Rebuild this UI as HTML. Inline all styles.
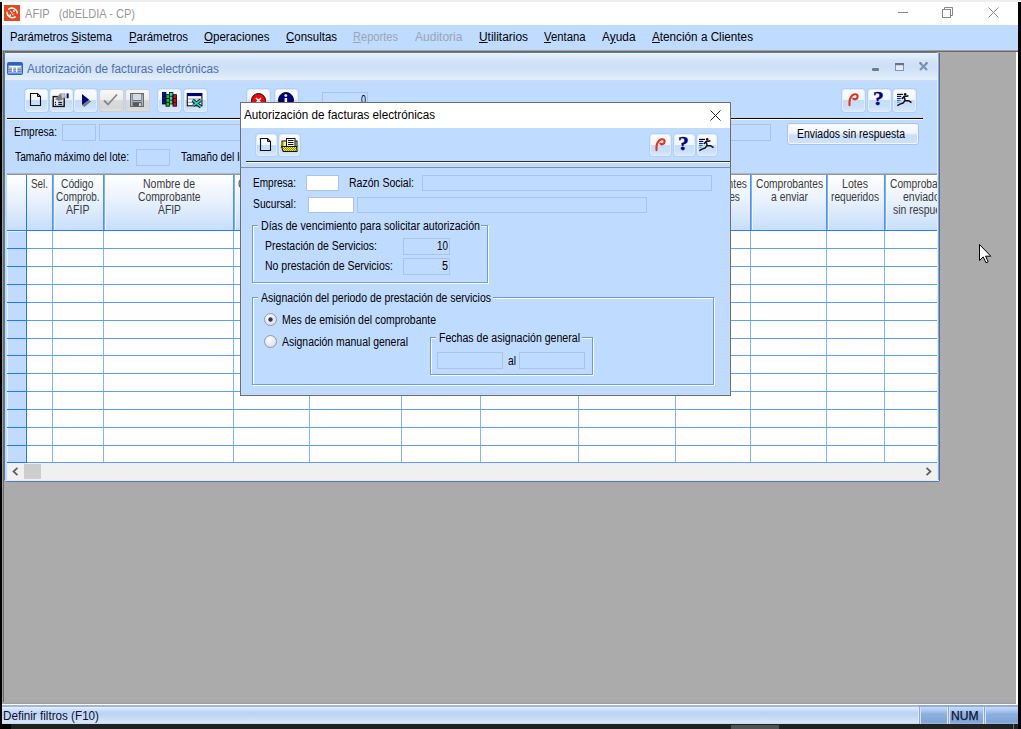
<!DOCTYPE html>
<html><head><meta charset="utf-8"><style>
html,body{margin:0;padding:0;width:1021px;height:729px;overflow:hidden;background:#ababab;}
body{position:relative;font-family:"Liberation Sans", sans-serif;}
div{position:absolute;box-sizing:border-box;}
.t{white-space:pre;}
u{text-decoration:underline;text-underline-offset:1px;}
svg{position:absolute;overflow:visible}

.tb{width:23px;height:23px;border-radius:3px;border:1px solid #e2edfb;
 background:linear-gradient(#fbfdff 0%,#eef5fe 48%,#c6ddf9 50%,#cadffa 80%,#d8e8fc 100%);
 box-shadow:0 0 0 1px rgba(150,190,240,0.35);}
.tg{width:24px;height:23px;border-radius:3px;border:1px solid #cfcfcf;
 background:linear-gradient(#f7f7f7 0%,#ececec 48%,#dadada 50%,#d6d6d6 85%,#e0e0e0 100%);}
.fd{border:1px solid #a9c4e6;background:#bfdbff;}
.fw{border:1px solid #a9c4e6;background:#ffffff;}
.gb{border:1px solid #6f9bd6;box-shadow:inset 1px 1px 0 #fff, 1px 1px 0 #fff;}

</style></head><body>
<div style="left:0px;top:0px;width:1021px;height:729px;background:#ababab"></div>
<div style="left:0px;top:0px;width:1021px;height:2px;background:#eeeeee"></div>
<div style="left:0px;top:2px;width:2px;height:727px;background:#000"></div>
<div style="left:1018px;top:2px;width:3px;height:727px;background:#000"></div>
<div style="left:2px;top:2px;width:1016px;height:23px;background:#fff"></div>
<svg style="left:4px;top:5px" width="16" height="16" viewBox="0 0 16 16"><rect width="16" height="16" fill="#e04a22"/><path d="M4.2 4.6 A5.4 5.4 0 0 1 13.3 8.6" stroke="#fff" stroke-width="1.4" fill="none"/><path d="M11.6 11.6 A5.4 5.4 0 0 1 3.0 6.8" stroke="#fff" stroke-width="1.4" fill="none"/><path d="M6.3 6.0 L9.8 10.4" stroke="#fff" stroke-width="1.3" stroke-dasharray="1.2 0.6" fill="none"/><circle cx="6.2" cy="10.2" r="0.9" fill="#fff"/><circle cx="9.9" cy="5.9" r="0.9" fill="#fff"/></svg>
<div class="t" style="left:25px;top:8px;font-size:12px;line-height:12px;color:#999999;transform:scaleX(0.9232);transform-origin:0 0;">AFIP   (dbELDIA - CP)</div>
<div style="left:898px;top:12px;width:10px;height:1px;background:#888"></div>
<svg style="left:940px;top:6px" width="14" height="12" viewBox="0 0 14 12"><rect x="2.5" y="3.5" width="8" height="8" fill="none" stroke="#888"/><path d="M4.5 3.5 V1.5 H12.5 V9.5 H10.5" fill="none" stroke="#888"/></svg>
<svg style="left:988px;top:7px" width="11" height="11" viewBox="0 0 11 11"><path d="M0.5 0.5 L10.5 10.5 M10.5 0.5 L0.5 10.5" stroke="#888" stroke-width="1"/></svg>
<div style="left:2px;top:25px;width:1016px;height:25px;background:#bfdbff"></div>
<div class="t" style="left:10px;top:31px;font-size:12px;line-height:12px;color:#000;transform:scaleX(0.9383);transform-origin:0 0;">Parámetros <u>S</u>istema</div>
<div class="t" style="left:129px;top:31px;font-size:12px;line-height:12px;color:#000;transform:scaleX(0.9511);transform-origin:0 0;"><u>P</u>arámetros</div>
<div class="t" style="left:204px;top:31px;font-size:12px;line-height:12px;color:#000;transform:scaleX(0.9626);transform-origin:0 0;"><u>O</u>peraciones</div>
<div class="t" style="left:286px;top:31px;font-size:12px;line-height:12px;color:#000;transform:scaleX(0.9555);transform-origin:0 0;"><u>C</u>onsultas</div>
<div class="t" style="left:353px;top:31px;font-size:12px;line-height:12px;color:#9aa6b4;transform:scaleX(0.9240);transform-origin:0 0;"><u>R</u>eportes</div>
<div class="t" style="left:415px;top:31px;font-size:12px;line-height:12px;color:#9aa6b4;transform:scaleX(1.0026);transform-origin:0 0;">Auditoria</div>
<div class="t" style="left:479px;top:31px;font-size:12px;line-height:12px;color:#000;transform:scaleX(0.9930);transform-origin:0 0;"><u>U</u>tilitarios</div>
<div class="t" style="left:544px;top:31px;font-size:12px;line-height:12px;color:#000;transform:scaleX(0.9422);transform-origin:0 0;"><u>V</u>entana</div>
<div class="t" style="left:602px;top:31px;font-size:12px;line-height:12px;color:#000;transform:scaleX(0.9908);transform-origin:0 0;">A<u>y</u>uda</div>
<div class="t" style="left:652px;top:31px;font-size:12px;line-height:12px;color:#000;transform:scaleX(0.9767);transform-origin:0 0;"><u>A</u>tención a Clientes</div>
<div style="left:2px;top:50px;width:1016px;height:1px;background:#a0a0a0"></div>
<div style="left:2px;top:50px;width:1px;height:654px;background:#a0a0a0"></div>
<div style="left:3px;top:51px;width:1015px;height:1px;background:#696969"></div>
<div style="left:3px;top:51px;width:1px;height:653px;background:#696969"></div>
<div style="left:1016px;top:52px;width:2px;height:653px;background:#fff"></div>
<div style="left:2px;top:702px;width:1014px;height:2px;background:linear-gradient(#a8a8a8,#9c9c9c)"></div>
<div style="left:2px;top:704px;width:1016px;height:1px;background:#fff"></div>
<div style="left:4px;top:52px;width:936px;height:430px;background:#bfdbff;border:1px solid #5a7aa5;border-radius:2px 5px 2px 3px"></div>
<div style="left:5px;top:53px;width:934px;height:27px;background:linear-gradient(#eaf2fd 0%,#d3e3f8 28%,#cde0f7 50%,#d9e7f9 80%,#e6f0fc 100%)"></div>
<svg style="left:7px;top:62px" width="16" height="13" viewBox="0 0 16 13"><rect x="0.5" y="0.5" width="15" height="12" rx="1" fill="#6b8fd0" stroke="#3563b8"/><rect x="1" y="1" width="14" height="2" fill="#2f5fc0"/><path d="M1 6.5H15M1 8.5H15M1 10.5H15" stroke="#a9bfe8" stroke-width="0.7"/><rect x="2" y="4" width="12" height="1.6" fill="#f4f4f4"/><rect x="5" y="4" width="1.3" height="6" fill="#fff"/><rect x="9" y="4" width="1.3" height="6" fill="#fff"/></svg>
<div class="t" style="left:27px;top:63px;font-size:12px;line-height:12px;color:#4c70a8;transform:scaleX(0.9790);transform-origin:0 0;">Autorización de facturas electrónicas</div>
<div style="left:872px;top:68px;width:7px;height:3px;background:#6c7b94;border-radius:1px"></div>
<svg style="left:895px;top:63px" width="9" height="8" viewBox="0 0 9 8"><rect x="0.5" y="0.5" width="8" height="7" fill="#dfeafa" stroke="#7d96bd"/><rect x="0" y="0" width="9" height="2.2" fill="#697284"/></svg>
<svg style="left:919px;top:62px" width="9" height="9" viewBox="0 0 9 9"><path d="M1 1 L8 8 M8 1 L1 8" stroke="#7a92b8" stroke-width="2.2"/><path d="M0.3 0.8 H2.4 M6.6 0.8 H8.7" stroke="#6a7486" stroke-width="1.2"/></svg>
<div style="left:5px;top:80px;width:934px;height:2px;background:#c7dcf6"></div>
<div class="tb" style="left:25px;top:89px"></div>
<div class="tb" style="left:50px;top:89px"></div>
<div class="tb" style="left:74px;top:89px"></div>
<div class="tg" style="left:99px;top:89px;width:25px"></div>
<div class="tg" style="left:125px;top:89px;width:25px"></div>
<div class="tb" style="left:158px;top:89px"></div>
<div class="tb" style="left:184px;top:89px"></div>
<div class="tb" style="left:247px;top:89px"></div>
<div class="tb" style="left:275px;top:89px"></div>
<div class="tb" style="left:842px;top:89px"></div>
<div class="tb" style="left:868px;top:89px"></div>
<div class="tb" style="left:893px;top:89px"></div>
<svg style="left:30px;top:93px" width="12" height="14" viewBox="0 0 12 14"><path d="M0.5 0.5 H7.5 L10.5 3.5 V12.5 H0.5 Z" fill="none" stroke="#111" stroke-width="1.1"/><path d="M7.5 0.5 V3.5 H10.5" fill="none" stroke="#111" stroke-width="1"/></svg>
<svg style="left:50px;top:88px" width="23" height="26" viewBox="0 0 23 26"><rect x="3.2" y="8.6" width="11" height="9.8" fill="#dfe9f6" stroke="#111" stroke-width="1.4"/><path d="M5 14.4H6M8.3 14.4H12.2M5 16.4H6M8.3 16.4H12.2" stroke="#222" stroke-width="1.1"/><path d="M5.3 11.3 L10.2 5.4 H15.1 L15.6 9.8 L11.2 12.2 L8.3 12.7 Z" fill="#7d7d7d"/><path d="M11 6 H14.6 L15 9 L12 10.5 Z" fill="#c4c4c4"/><rect x="16.6" y="5.4" width="2" height="4.9" fill="#0000b0"/></svg>
<svg style="left:73px;top:88px" width="23" height="26" viewBox="0 0 23 26"><path d="M9 17 L16.2 12.1 L18.1 13.6 L11.3 18.9 Z" fill="#7a7a7a"/><path d="M9 6 L16.2 11.8 L9 17 Z" fill="#000080"/></svg>
<svg style="left:103px;top:93px" width="16" height="14" viewBox="0 0 16 14"><path d="M1 7.5 L5 11.5 L14 1.5" fill="none" stroke="#888" stroke-width="1.8"/></svg>
<svg style="left:130px;top:93px" width="14" height="14" viewBox="0 0 14 14"><rect x="0" y="0" width="14" height="14" fill="#6b6b6b"/><rect x="1" y="1" width="1.5" height="12" fill="#a3b3ca"/><rect x="11.5" y="1.5" width="1.5" height="11.5" fill="#a3b3ca"/><rect x="3" y="1" width="8" height="6" fill="#d3dbe7"/><rect x="2.5" y="8" width="9" height="1" fill="#a3b3ca"/><rect x="3.3" y="9.6" width="8" height="3.6" fill="#585858"/><rect x="9" y="10.2" width="1.8" height="2.8" fill="#d6dde8"/></svg>
<svg style="left:162px;top:92px" width="15" height="15" viewBox="0 0 15 15"><rect x="0.5" y="0.5" width="3.4" height="11.5" fill="#0000ff" stroke="#000" stroke-width="0.8"/><path d="M0.5 4.3 H3.9" stroke="#000" stroke-width="0.8"/><path d="M0.5 8.1 H3.9" stroke="#000" stroke-width="0.8"/><rect x="4.0" y="2.7" width="3.4" height="11.5" fill="#00d800" stroke="#000" stroke-width="0.8"/><path d="M4.0 6.5 H7.4" stroke="#000" stroke-width="0.8"/><path d="M4.0 10.3 H7.4" stroke="#000" stroke-width="0.8"/><rect x="7.5" y="0.5" width="3.4" height="11.5" fill="#00e8e8" stroke="#000" stroke-width="0.8"/><path d="M7.5 4.3 H10.9" stroke="#000" stroke-width="0.8"/><path d="M7.5 8.1 H10.9" stroke="#000" stroke-width="0.8"/><rect x="11.0" y="2.7" width="3.4" height="11.5" fill="#f00000" stroke="#000" stroke-width="0.8"/><path d="M11.0 6.5 H14.4" stroke="#000" stroke-width="0.8"/><path d="M11.0 10.3 H14.4" stroke="#000" stroke-width="0.8"/></svg>
<svg style="left:184px;top:90px" width="22" height="22" viewBox="0 0 22 22"><rect x="3.3" y="3.5" width="14.6" height="12.3" fill="#f4f4f4" stroke="#151515" stroke-width="1.1"/><rect x="3.3" y="3.5" width="14.6" height="2.6" fill="#000080"/><path d="M4 9H17.5M4 12.4H17.5" stroke="#a0a0a0" stroke-width="1"/><path d="M4 7.3H17.5M4 10.7H17.5M4 14H17.5" stroke="#fff" stroke-width="1" stroke-dasharray="1.5 2"/><path d="M8.6 10.2 L16.9 16.8 M9.3 15.4 L16.8 10.2" stroke="#111" stroke-width="3.4"/><path d="M8.6 10.2 L16.9 16.8 M9.3 15.4 L16.8 10.2" stroke="#22d6d0" stroke-width="1.7"/></svg>
<svg style="left:251px;top:93px" width="16" height="16" viewBox="0 0 16 16"><circle cx="7.5" cy="7.5" r="7" fill="#ff0000" stroke="#111" stroke-width="1"/><path d="M5 5 L10 10 M10 5 L5 10" stroke="#fff" stroke-width="1.6"/></svg>
<svg style="left:278px;top:92px" width="16" height="16" viewBox="0 0 16 16"><circle cx="8" cy="8" r="7.5" fill="#000080" stroke="#111" stroke-width="1"/><circle cx="7.8" cy="3.6" r="1.4" fill="#fff"/><rect x="6.6" y="6" width="2.5" height="6" fill="#fff"/></svg>
<div style="left:322px;top:92px;width:46px;height:17px;border:1px solid #a9c4e6"></div>
<div class="t" style="left:361px;top:94px;font-size:12px;line-height:12px;color:#000;transform:scaleX(0.7477);transform-origin:0 0;">0</div>
<svg style="left:843px;top:89px" width="22" height="22" viewBox="0 0 22 22"><path d="M6.5 16.2 C6.2 12.5 6.8 8.6 9.3 6.4 C11.5 4.5 14.6 4.8 14.6 7.6 C14.6 10.2 11.6 11 10.2 9.6" fill="none" stroke="#e8321c" stroke-width="2.1" stroke-linecap="round"/></svg>
<div class="t" style="left:873px;top:89px;font-family:'Liberation Serif',serif;font-weight:bold;font-size:18px;line-height:20px;color:#000080;-webkit-text-stroke:0.4px #000080;transform:scaleX(1.2);transform-origin:0 0">?</div>
<svg style="left:894px;top:89px" width="22" height="22" viewBox="0 0 22 22"><path d="M3 5.4H9" stroke="#111" stroke-width="1.2"/><path d="M3 7.4H7.3" stroke="#1010a0" stroke-width="1.2"/><path d="M3 9.5H6.8" stroke="#1a1aff" stroke-width="1.2"/><path d="M3 11.5H6.5" stroke="#109080" stroke-width="1.2"/><path d="M3.3 13.4H5.4" stroke="#888" stroke-width="1"/><path d="M3.3 16.6 L6 15.1 L9 14 L11.2 11.5 L14.8 11.8 L17.5 13.6 M11.2 11.5 L10 7.5 L7.8 10 M10 7.5 L12.5 7.2 L14.5 6.8" fill="none" stroke="#111" stroke-width="1.5" stroke-linejoin="round"/><circle cx="11.2" cy="5.4" r="1.3" fill="#111"/></svg>
<div style="left:7px;top:118px;width:916px;height:1px;background:#000"></div>
<div style="left:7px;top:119px;width:916px;height:1px;background:#fff"></div>
<div class="t" style="left:14px;top:126px;font-size:12px;line-height:12px;color:#000;transform:scaleX(0.8372);transform-origin:0 0;">Empresa:</div>
<div class="fd" style="left:62px;top:124px;width:34px;height:17px"></div>
<div class="fd" style="left:99px;top:124px;width:672px;height:17px"></div>
<div class="t" style="left:15px;top:151px;font-size:12px;line-height:12px;color:#000;transform:scaleX(0.8545);transform-origin:0 0;">Tamaño máximo del lote:</div>
<div class="fd" style="left:136px;top:149px;width:34px;height:17px"></div>
<div class="t" style="left:181px;top:151px;font-size:12px;line-height:12px;color:#000;transform:scaleX(0.8600);transform-origin:0 0;">Tamaño del lote:</div>
<div style="left:787px;top:123px;width:132px;height:22px;border-radius:3px;border:1px solid #a8c6ec;background:linear-gradient(#fbfdff 0%,#eef5fe 45%,#c9def9 55%,#cfe2fb 100%);box-shadow:inset 0 0 0 1px #f2f7fe"></div>
<div class="t" style="left:797px;top:128px;font-size:12px;line-height:12px;color:#000;transform:scaleX(0.8704);transform-origin:0 0;">Enviados sin respuesta</div>
<div style="left:7px;top:173px;width:930px;height:1px;background:#a9b4c2"></div>
<div style="left:7px;top:174px;width:930px;height:1px;background:#8f9aa8"></div>
<div style="left:7px;top:175px;width:930px;height:55px;background:linear-gradient(#ffffff 0%,#e9f2fd 45%,#c7defa 100%)"></div>
<div style="left:7px;top:231px;width:930px;height:232px;background:#fff"></div>
<div style="left:7px;top:231px;width:19px;height:232px;background:#c0dbfd;box-shadow:inset 1px 1px 0 #e6f1ff"></div>
<div style="left:52px;top:175px;width:1px;height:55px;background:#4a90ff"></div>
<div style="left:53px;top:175px;width:1px;height:55px;background:#78b0ff"></div>
<div style="left:54px;top:175px;width:1px;height:55px;background:rgba(255,255,255,0.7)"></div>
<div style="left:52px;top:231px;width:1px;height:232px;background:#7fb3ff"></div>
<div style="left:103px;top:175px;width:1px;height:55px;background:#4a90ff"></div>
<div style="left:104px;top:175px;width:1px;height:55px;background:#78b0ff"></div>
<div style="left:105px;top:175px;width:1px;height:55px;background:rgba(255,255,255,0.7)"></div>
<div style="left:103px;top:231px;width:1px;height:232px;background:#7fb3ff"></div>
<div style="left:233px;top:175px;width:1px;height:55px;background:#4a90ff"></div>
<div style="left:234px;top:175px;width:1px;height:55px;background:#78b0ff"></div>
<div style="left:235px;top:175px;width:1px;height:55px;background:rgba(255,255,255,0.7)"></div>
<div style="left:233px;top:231px;width:1px;height:232px;background:#7fb3ff"></div>
<div style="left:309px;top:175px;width:1px;height:55px;background:#4a90ff"></div>
<div style="left:310px;top:175px;width:1px;height:55px;background:#78b0ff"></div>
<div style="left:311px;top:175px;width:1px;height:55px;background:rgba(255,255,255,0.7)"></div>
<div style="left:309px;top:231px;width:1px;height:232px;background:#7fb3ff"></div>
<div style="left:401px;top:175px;width:1px;height:55px;background:#4a90ff"></div>
<div style="left:402px;top:175px;width:1px;height:55px;background:#78b0ff"></div>
<div style="left:403px;top:175px;width:1px;height:55px;background:rgba(255,255,255,0.7)"></div>
<div style="left:401px;top:231px;width:1px;height:232px;background:#7fb3ff"></div>
<div style="left:480px;top:175px;width:1px;height:55px;background:#4a90ff"></div>
<div style="left:481px;top:175px;width:1px;height:55px;background:#78b0ff"></div>
<div style="left:482px;top:175px;width:1px;height:55px;background:rgba(255,255,255,0.7)"></div>
<div style="left:480px;top:231px;width:1px;height:232px;background:#7fb3ff"></div>
<div style="left:578px;top:175px;width:1px;height:55px;background:#4a90ff"></div>
<div style="left:579px;top:175px;width:1px;height:55px;background:#78b0ff"></div>
<div style="left:580px;top:175px;width:1px;height:55px;background:rgba(255,255,255,0.7)"></div>
<div style="left:578px;top:231px;width:1px;height:232px;background:#7fb3ff"></div>
<div style="left:675px;top:175px;width:1px;height:55px;background:#4a90ff"></div>
<div style="left:676px;top:175px;width:1px;height:55px;background:#78b0ff"></div>
<div style="left:677px;top:175px;width:1px;height:55px;background:rgba(255,255,255,0.7)"></div>
<div style="left:675px;top:231px;width:1px;height:232px;background:#7fb3ff"></div>
<div style="left:750px;top:175px;width:1px;height:55px;background:#4a90ff"></div>
<div style="left:751px;top:175px;width:1px;height:55px;background:#78b0ff"></div>
<div style="left:752px;top:175px;width:1px;height:55px;background:rgba(255,255,255,0.7)"></div>
<div style="left:750px;top:231px;width:1px;height:232px;background:#7fb3ff"></div>
<div style="left:826px;top:175px;width:1px;height:55px;background:#4a90ff"></div>
<div style="left:827px;top:175px;width:1px;height:55px;background:#78b0ff"></div>
<div style="left:828px;top:175px;width:1px;height:55px;background:rgba(255,255,255,0.7)"></div>
<div style="left:826px;top:231px;width:1px;height:232px;background:#7fb3ff"></div>
<div style="left:884px;top:175px;width:1px;height:55px;background:#4a90ff"></div>
<div style="left:885px;top:175px;width:1px;height:55px;background:#78b0ff"></div>
<div style="left:886px;top:175px;width:1px;height:55px;background:rgba(255,255,255,0.7)"></div>
<div style="left:884px;top:231px;width:1px;height:232px;background:#7fb3ff"></div>
<div style="left:26px;top:248px;width:911px;height:1px;background:#5c9dff"></div>
<div style="left:7px;top:248px;width:19px;height:1px;background:#1f78ff"></div>
<div style="left:26px;top:266px;width:911px;height:1px;background:#5c9dff"></div>
<div style="left:7px;top:266px;width:19px;height:1px;background:#1f78ff"></div>
<div style="left:26px;top:284px;width:911px;height:1px;background:#5c9dff"></div>
<div style="left:7px;top:284px;width:19px;height:1px;background:#1f78ff"></div>
<div style="left:26px;top:302px;width:911px;height:1px;background:#5c9dff"></div>
<div style="left:7px;top:302px;width:19px;height:1px;background:#1f78ff"></div>
<div style="left:26px;top:320px;width:911px;height:1px;background:#5c9dff"></div>
<div style="left:7px;top:320px;width:19px;height:1px;background:#1f78ff"></div>
<div style="left:26px;top:338px;width:911px;height:1px;background:#5c9dff"></div>
<div style="left:7px;top:338px;width:19px;height:1px;background:#1f78ff"></div>
<div style="left:26px;top:355px;width:911px;height:1px;background:#5c9dff"></div>
<div style="left:7px;top:355px;width:19px;height:1px;background:#1f78ff"></div>
<div style="left:26px;top:373px;width:911px;height:1px;background:#5c9dff"></div>
<div style="left:7px;top:373px;width:19px;height:1px;background:#1f78ff"></div>
<div style="left:26px;top:391px;width:911px;height:1px;background:#5c9dff"></div>
<div style="left:7px;top:391px;width:19px;height:1px;background:#1f78ff"></div>
<div style="left:26px;top:409px;width:911px;height:1px;background:#5c9dff"></div>
<div style="left:7px;top:409px;width:19px;height:1px;background:#1f78ff"></div>
<div style="left:26px;top:427px;width:911px;height:1px;background:#5c9dff"></div>
<div style="left:7px;top:427px;width:19px;height:1px;background:#1f78ff"></div>
<div style="left:26px;top:445px;width:911px;height:1px;background:#5c9dff"></div>
<div style="left:7px;top:445px;width:19px;height:1px;background:#1f78ff"></div>
<div style="left:26px;top:462px;width:911px;height:1px;background:#5c9dff"></div>
<div style="left:7px;top:462px;width:19px;height:1px;background:#1f78ff"></div>
<div style="left:7px;top:230px;width:930px;height:1px;background:#2a7dff"></div>
<div style="left:26px;top:175px;width:1px;height:288px;background:#1f78ff"></div>
<div class="t" style="left:31px;top:178px;font-size:12px;line-height:12px;color:#3a3a3a;transform:scaleX(0.8218);transform-origin:0 0;">Sel.</div>
<div class="t" style="left:61.2px;top:178px;font-size:12px;line-height:12px;color:#3a3a3a;transform:scaleX(0.8546);transform-origin:0 0;">Código</div>
<div class="t" style="left:55.8px;top:191px;font-size:12px;line-height:12px;color:#3a3a3a;transform:scaleX(0.8256);transform-origin:0 0;">Comprob.</div>
<div class="t" style="left:65.8px;top:204px;font-size:12px;line-height:12px;color:#3a3a3a;transform:scaleX(0.8811);transform-origin:0 0;">AFIP</div>
<div class="t" style="left:143.0px;top:178px;font-size:12px;line-height:12px;color:#3a3a3a;transform:scaleX(0.8758);transform-origin:0 0;">Nombre de</div>
<div class="t" style="left:137.8px;top:191px;font-size:12px;line-height:12px;color:#3a3a3a;transform:scaleX(0.8595);transform-origin:0 0;">Comprobante</div>
<div class="t" style="left:157.5px;top:204px;font-size:12px;line-height:12px;color:#3a3a3a;transform:scaleX(0.8623);transform-origin:0 0;">AFIP</div>
<div class="t" style="left:238px;top:178px;font-size:12px;line-height:12px;color:#3a3a3a;transform:scaleX(0.8500);transform-origin:0 0;">Cantidad</div>
<div class="t" style="left:680.1px;top:178px;font-size:12px;line-height:12px;color:#3a3a3a;transform:scaleX(0.8500);transform-origin:0 0;">Comprobantes</div>
<div class="t" style="left:689.6px;top:191px;font-size:12px;line-height:12px;color:#3a3a3a;transform:scaleX(0.8500);transform-origin:0 0;">pendientes</div>
<div class="t" style="left:755.5px;top:178px;font-size:12px;line-height:12px;color:#3a3a3a;transform:scaleX(0.8511);transform-origin:0 0;">Comprobantes</div>
<div class="t" style="left:770.5px;top:191px;font-size:12px;line-height:12px;color:#3a3a3a;transform:scaleX(0.8664);transform-origin:0 0;">a enviar</div>
<div class="t" style="left:841.5px;top:178px;font-size:12px;line-height:12px;color:#3a3a3a;transform:scaleX(0.8856);transform-origin:0 0;">Lotes</div>
<div class="t" style="left:830.5px;top:191px;font-size:12px;line-height:12px;color:#3a3a3a;transform:scaleX(0.8465);transform-origin:0 0;">requeridos</div>
<div class="t" style="left:890.0px;top:178px;font-size:12px;line-height:12px;color:#3a3a3a;transform:scaleX(0.8511);transform-origin:0 0;">Comprobantes</div>
<div class="t" style="left:902.5px;top:191px;font-size:12px;line-height:12px;color:#3a3a3a;transform:scaleX(0.8741);transform-origin:0 0;">enviados</div>
<div class="t" style="left:892.5px;top:204px;font-size:12px;line-height:12px;color:#3a3a3a;transform:scaleX(0.8687);transform-origin:0 0;">sin respuesta</div>
<div style="left:940px;top:170px;width:40px;height:70px;background:#ababab"></div>
<div style="left:937px;top:53px;width:3px;height:428px;background:#bfdbff"></div>
<div style="left:937px;top:53px;width:1px;height:428px;background:#dcebfd"></div>
<div style="left:938px;top:53px;width:1px;height:428px;background:#8aa6cc"></div>
<div style="left:939px;top:53px;width:1px;height:428px;background:#4f6f9c"></div>
<div style="left:7px;top:463px;width:930px;height:17px;background:#f0f0f0"></div>
<div style="left:24px;top:464px;width:17px;height:15px;background:#cdcdcd"></div>
<svg style="left:12px;top:467px" width="7" height="9" viewBox="0 0 7 9"><path d="M5.5 0.8 L1.5 4.5 L5.5 8.2" fill="none" stroke="#606060" stroke-width="1.8"/></svg>
<svg style="left:925px;top:467px" width="7" height="9" viewBox="0 0 7 9"><path d="M1.5 0.8 L5.5 4.5 L1.5 8.2" fill="none" stroke="#606060" stroke-width="1.8"/></svg>
<div style="left:5px;top:480px;width:934px;height:1px;background:#dcebfd"></div>
<div style="left:240px;top:102px;width:491px;height:294px;background:#bfdbff;border:1px solid #6e6e6e"></div>
<div style="left:241px;top:103px;width:489px;height:25px;background:#fff"></div>
<div class="t" style="left:244px;top:109px;font-size:12px;line-height:12px;color:#000;transform:scaleX(0.9739);transform-origin:0 0;">Autorización de facturas electrónicas</div>
<svg style="left:710px;top:110px" width="11" height="11" viewBox="0 0 11 11"><path d="M0.5 0.5 L10.5 10.5 M10.5 0.5 L0.5 10.5" stroke="#222" stroke-width="1"/></svg>
<div class="tb" style="left:256px;top:134px;width:21px;height:22px"></div>
<div class="tb" style="left:279px;top:134px;width:21px;height:22px"></div>
<div class="tb" style="left:650px;top:134px;width:21px;height:22px"></div>
<div class="tb" style="left:674px;top:134px;width:21px;height:22px"></div>
<div class="tb" style="left:697px;top:134px;width:20px;height:22px"></div>
<svg style="left:260px;top:138px" width="12" height="14" viewBox="0 0 12 14"><path d="M0.5 0.5 H7.5 L10.5 3.5 V12.5 H0.5 Z" fill="none" stroke="#111" stroke-width="1.1"/><path d="M7.5 0.5 V3.5 H10.5" fill="none" stroke="#111" stroke-width="1"/></svg>
<svg style="left:281px;top:138px" width="17" height="15" viewBox="0 0 17 15"><defs><pattern id="chk" width="2" height="2" patternUnits="userSpaceOnUse"><rect width="2" height="2" fill="#f4f400"/><rect width="1" height="1" fill="#8a8a20"/><rect x="1" y="1" width="1" height="1" fill="#8a8a20"/></pattern></defs><rect x="1" y="3" width="15" height="6" fill="#ffff30" stroke="#111" stroke-width="1"/><path d="M2.5 3.5V8.5M14.5 3.5V8.5" stroke="#999" stroke-width="1" stroke-dasharray="1 1"/><rect x="5.5" y="0.5" width="8.5" height="8.5" fill="#fff" stroke="#111"/><path d="M7 2.5H12.5M7 4.5H12.5M7 6.5H12.5" stroke="#111" stroke-width="1.1"/><path d="M0.5 8.5 H15.5 L16.2 13.5 H2 Z" fill="url(#chk)" stroke="#111"/></svg>
<svg style="left:650px;top:134px" width="22" height="22" viewBox="0 0 22 22"><path d="M6.5 16.2 C6.2 12.5 6.8 8.6 9.3 6.4 C11.5 4.5 14.6 4.8 14.6 7.6 C14.6 10.2 11.6 11 10.2 9.6" fill="none" stroke="#e8321c" stroke-width="2.1" stroke-linecap="round"/></svg>
<div class="t" style="left:678px;top:134px;font-family:'Liberation Serif',serif;font-weight:bold;font-size:18px;line-height:20px;color:#000080;-webkit-text-stroke:0.4px #000080;transform:scaleX(1.2);transform-origin:0 0">?</div>
<svg style="left:696px;top:134px" width="22" height="22" viewBox="0 0 22 22"><path d="M3 5.4H9" stroke="#111" stroke-width="1.2"/><path d="M3 7.4H7.3" stroke="#1010a0" stroke-width="1.2"/><path d="M3 9.5H6.8" stroke="#1a1aff" stroke-width="1.2"/><path d="M3 11.5H6.5" stroke="#109080" stroke-width="1.2"/><path d="M3.3 13.4H5.4" stroke="#888" stroke-width="1"/><path d="M3.3 16.6 L6 15.1 L9 14 L11.2 11.5 L14.8 11.8 L17.5 13.6 M11.2 11.5 L10 7.5 L7.8 10 M10 7.5 L12.5 7.2 L14.5 6.8" fill="none" stroke="#111" stroke-width="1.5" stroke-linejoin="round"/><circle cx="11.2" cy="5.4" r="1.3" fill="#111"/></svg>
<div style="left:246px;top:161px;width:484px;height:1px;background:#333"></div>
<div style="left:246px;top:162px;width:484px;height:1px;background:#fff"></div>
<div style="left:241px;top:167px;width:489px;height:1px;background:#8a9099"></div>
<div class="t" style="left:253px;top:177px;font-size:12px;line-height:12px;color:#000;transform:scaleX(0.8372);transform-origin:0 0;">Empresa:</div>
<div class="fw" style="left:306px;top:175px;width:33px;height:16px"></div>
<div class="t" style="left:349px;top:177px;font-size:12px;line-height:12px;color:#000;transform:scaleX(0.8778);transform-origin:0 0;">Razón Social:</div>
<div class="fd" style="left:422px;top:175px;width:290px;height:16px"></div>
<div class="t" style="left:253px;top:198px;font-size:12px;line-height:12px;color:#000;transform:scaleX(0.8595);transform-origin:0 0;">Sucursal:</div>
<div class="fw" style="left:308px;top:197px;width:46px;height:16px"></div>
<div class="fd" style="left:357px;top:197px;width:290px;height:16px"></div>
<div class="gb" style="left:252px;top:225px;width:236px;height:58px"></div>
<div style="left:258px;top:220px;width:223px;height:12px;background:#bfdbff"></div>
<div class="t" style="left:261px;top:220px;font-size:12px;line-height:12px;color:#000;transform:scaleX(0.8826);transform-origin:0 0;">Días de vencimiento para solicitar autorización</div>
<div class="t" style="left:265px;top:240px;font-size:12px;line-height:12px;color:#000;transform:scaleX(0.8700);transform-origin:0 0;">Prestación de Servicios:</div>
<div class="fd" style="left:403px;top:238px;width:47px;height:17px"></div>
<div class="t" style="left:437px;top:240px;font-size:12px;line-height:12px;color:#000;transform:scaleX(0.8234);transform-origin:0 0;">10</div>
<div class="t" style="left:265px;top:260px;font-size:12px;line-height:12px;color:#000;transform:scaleX(0.8762);transform-origin:0 0;">No prestación de Servicios:</div>
<div class="fd" style="left:403px;top:258px;width:47px;height:17px"></div>
<div class="t" style="left:442px;top:260px;font-size:12px;line-height:12px;color:#000;transform:scaleX(0.8972);transform-origin:0 0;">5</div>
<div class="gb" style="left:252px;top:297px;width:462px;height:88px"></div>
<div style="left:258px;top:292px;width:235px;height:12px;background:#bfdbff"></div>
<div class="t" style="left:261px;top:292px;font-size:12px;line-height:12px;color:#000;transform:scaleX(0.8729);transform-origin:0 0;">Asignación del periodo de prestación de servicios</div>
<svg style="left:264px;top:313px" width="13" height="13" viewBox="0 0 13 13"><defs><radialGradient id="rg" cx="0.4" cy="0.35" r="0.7"><stop offset="0" stop-color="#ffffff"/><stop offset="1" stop-color="#d6dbe2"/></radialGradient></defs><circle cx="6.5" cy="6.5" r="6" fill="url(#rg)" stroke="#8f9bab" stroke-width="1"/><circle cx="6.5" cy="6.5" r="2.2" fill="#263a5a"/></svg>
<div class="t" style="left:282px;top:314px;font-size:12px;line-height:12px;color:#000;transform:scaleX(0.8712);transform-origin:0 0;">Mes de emisión del comprobante</div>
<svg style="left:264px;top:335px" width="13" height="13" viewBox="0 0 13 13"><circle cx="6.5" cy="6.5" r="6" fill="url(#rg)" stroke="#8f9bab" stroke-width="1"/></svg>
<div class="t" style="left:282px;top:336px;font-size:12px;line-height:12px;color:#000;transform:scaleX(0.8704);transform-origin:0 0;">Asignación manual general</div>
<div class="gb" style="left:430px;top:337px;width:163px;height:38px"></div>
<div style="left:436px;top:332px;width:146px;height:12px;background:#bfdbff"></div>
<div class="t" style="left:439px;top:332px;font-size:12px;line-height:12px;color:#000;transform:scaleX(0.8806);transform-origin:0 0;">Fechas de asignación general</div>
<div class="fd" style="left:437px;top:352px;width:66px;height:17px"></div>
<div class="t" style="left:508px;top:355px;font-size:12px;line-height:12px;color:#000;transform:scaleX(0.8562);transform-origin:0 0;">al</div>
<div class="fd" style="left:519px;top:352px;width:66px;height:17px"></div>
<div style="left:2px;top:705px;width:1016px;height:19px;background:linear-gradient(#9db6d9 0px,#9db6d9 2px,#e8f1fd 2px,#d4e4f9 4px,#b8d3f4 8px,#c4d9f4 12px,#d8e6f6 17px,#c8e0ff 18px,#c8e0ff 19px)"></div>
<div style="left:918px;top:705px;width:100px;height:19px;background:linear-gradient(#8fadd8 0px,#8fadd8 2px,#c8dcf7 2px,#b0cdf2 5px,#8cb0e0 9px,#7fa5d8 17px,#9ab8e2 19px)"></div>
<div style="left:918px;top:707px;width:1px;height:17px;background:#dfeafa"></div>
<div style="left:919px;top:707px;width:1px;height:17px;background:#8aa8d4"></div>
<div style="left:920px;top:707px;width:1px;height:17px;background:#d4e3f8"></div>
<div style="left:947px;top:707px;width:1px;height:17px;background:#dfeafa"></div>
<div style="left:948px;top:707px;width:1px;height:17px;background:#8aa8d4"></div>
<div style="left:949px;top:707px;width:1px;height:17px;background:#d4e3f8"></div>
<div style="left:983px;top:707px;width:1px;height:17px;background:#dfeafa"></div>
<div style="left:984px;top:707px;width:1px;height:17px;background:#8aa8d4"></div>
<div style="left:985px;top:707px;width:1px;height:17px;background:#d4e3f8"></div>
<div class="t" style="left:3px;top:710px;font-size:12px;line-height:12px;color:#101030;transform:scaleX(0.9728);transform-origin:0 0;">Definir filtros (F10)</div>
<div class="t" style="left:951px;top:710px;font-size:12px;line-height:12px;color:#101030;transform:scaleX(1.0063);transform-origin:0 0;-webkit-text-stroke:0.25px #101030;">NUM</div>
<div style="left:2px;top:724px;width:1016px;height:5px;background:#212121"></div>
<div style="left:1013px;top:724px;width:1px;height:5px;background:#6a6a6a"></div>
<div style="left:731px;top:725px;width:48px;height:4px;background:#525252"></div>
<div style="left:0px;top:724px;width:11px;height:5px;background:#000"></div>
<svg style="left:978px;top:243px" width="14" height="21" viewBox="0 0 14 21"><path d="M1.5 1.5 V17.5 L5.2 13.9 L8 19.8 L10.2 18.8 L7.6 13.2 L12.8 13.2 Z" fill="#fff" stroke="#000" stroke-width="1" stroke-linejoin="miter"/></svg>
</body></html>
